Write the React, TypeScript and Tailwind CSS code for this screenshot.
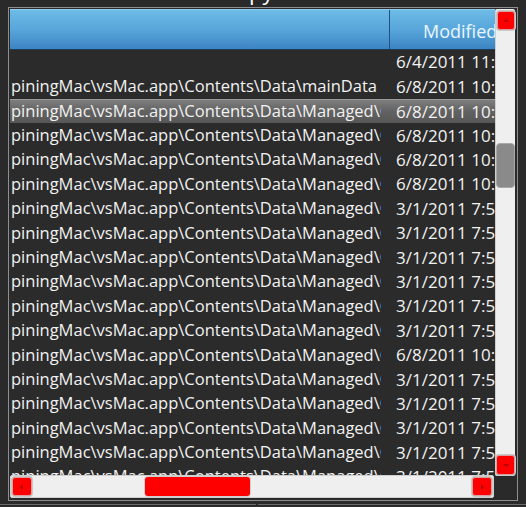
import React from "react";

const M = "piningMac\\vsMac.app\\Contents\\Data\\Managed\\Cache";
const rows: { p: string; d: string }[] = [
  { p: "", d: "6/4/2011 11:42 AM" },
  { p: "piningMac\\vsMac.app\\Contents\\Data\\mainData", d: "6/8/2011 10:15 AM" },
  { p: M, d: "6/8/2011 10:15 AM" },
  { p: M, d: "6/8/2011 10:15 AM" },
  { p: M, d: "6/8/2011 10:15 AM" },
  { p: M, d: "6/8/2011 10:15 AM" },
  { p: M, d: "3/1/2011 7:52 PM" },
  { p: M, d: "3/1/2011 7:52 PM" },
  { p: M, d: "3/1/2011 7:52 PM" },
  { p: M, d: "3/1/2011 7:52 PM" },
  { p: M, d: "3/1/2011 7:52 PM" },
  { p: M, d: "3/1/2011 7:52 PM" },
  { p: M, d: "6/8/2011 10:15 AM" },
  { p: M, d: "3/1/2011 7:52 PM" },
  { p: M, d: "3/1/2011 7:52 PM" },
  { p: M, d: "3/1/2011 7:52 PM" },
  { p: M, d: "3/1/2011 7:52 PM" },
  { p: M, d: "3/1/2011 7:52 PM" },
];

function Arrow({ dir }: { dir: "up" | "down" | "left" | "right" }) {
  const pts =
    dir === "up"
      ? "2,6 5,3 8,6"
      : dir === "down"
      ? "2,4 5,7 8,4"
      : dir === "left"
      ? "6,2 3,5 6,8"
      : "4,2 7,5 4,8";
  return (
    <svg width="10" height="10" viewBox="0 0 10 10">
      <polygon points={pts} fill="#b80000" />
    </svg>
  );
}

function RedBtn({ dir, cls }: { dir: "up" | "down" | "left" | "right"; cls: string }) {
  return (
    <div
      className={
        "flex items-center justify-center rounded-[3px] bg-[#ff0000] border border-[#d8a0a0] shadow-[0_0_0_1px_#c8c8c8] " +
        cls
      }
    >
      <Arrow dir={dir} />
    </div>
  );
}

export default function App() {
  return (
    <div
      className="w-[526px] h-[507px] bg-[#2a2a2a] overflow-hidden flex flex-col"
      style={{ fontFamily: '"Open Sans", "Noto Sans", sans-serif' }}
    >
      {/* clipped title */}
      <div className="h-[7px] overflow-hidden pl-[222px]">
        <div className="mt-[-22px] text-[22px] leading-[26px] text-white">Copy</div>
      </div>

      {/* frame */}
      <div className="ml-[8px] w-[510px] h-[494px] border border-[#8e8e8e] p-[1px] flex">
        {/* list + hscroll */}
        <div className="w-[485px] flex flex-col">
          <div className="h-[467px] overflow-hidden flex flex-col bg-[#2b2b2b]">
            {/* header */}
            <div className="h-[41px] shrink-0 flex border-t border-[#8fcaf0] border-b border-b-[#1d3a56] bg-gradient-to-b from-[#6dbbe6] via-[#58a6db] to-[#3c84c3]">
              <div className="w-[380px] shrink-0 border-r border-[#23507e]" />
              <div className="flex-1 flex items-center pl-[33px] pt-[4px] text-[18px] text-[#eaf6ff] whitespace-nowrap overflow-hidden">
                Modified
              </div>
            </div>
            {/* rows */}
            {rows.map((r, i) => (
              <div
                key={i}
                className={
                  "h-[24.4px] shrink-0 flex items-center text-[16.5px] text-[#f2f2f2] whitespace-nowrap " +
                  (i === 2
                    ? "bg-gradient-to-b from-[#7e7e7e] via-[#626262] to-[#575757] border-t border-[#9a9a9a]"
                    : "")
                }
              >
                <div className="w-[380px] shrink-0 pl-[1px]">
                  <div className="w-[370px] overflow-hidden">{r.p}</div>
                </div>
                <div className="flex-1 overflow-hidden pl-[6px] text-[17px]">{r.d}</div>
              </div>
            ))}
          </div>
          {/* horizontal scrollbar */}
          <div className="mt-[-1px] w-[484px] h-[23px] shrink-0 bg-[#efefef] border border-[#cfcfcf] rounded-[2px] flex items-center relative">
            <RedBtn dir="left" cls="ml-[1px] w-[20px] h-[19px]" />
            <div className="ml-[113px] w-[105px] h-[19px] rounded-[3px] bg-[#ff0000] shadow-[0_0_0_1px_#d0d0d0]" />
            <div className="flex-1" />
            <RedBtn dir="right" cls="mr-[1px] w-[20px] h-[19px]" />
          </div>
        </div>
        {/* vertical scrollbar */}
        <div className="w-[20px] h-[467px] bg-[#efefef] border-l border-[#cfcfcf] rounded-[2px] flex flex-col items-center pt-[2px] pb-[1px]">
          <RedBtn dir="up" cls="w-[18px] h-[19px]" />
          <div className="mt-[113px] w-[19px] h-[45px] rounded-[4px] bg-[#8a8a8a] border border-[#a8a8a8]" />
          <div className="flex-1" />
          <RedBtn dir="down" cls="w-[19px] h-[20px]" />
        </div>
      </div>

      {/* bottom edge */}
      <div className="mt-[3px] flex h-[2px]">
        <div className="w-[256px] border-t border-[#6a6a6a]" />
        <div className="w-[2px]" />
        <div className="flex-1 border-t border-[#6a6a6a]" />
      </div>
    </div>
  );
}
